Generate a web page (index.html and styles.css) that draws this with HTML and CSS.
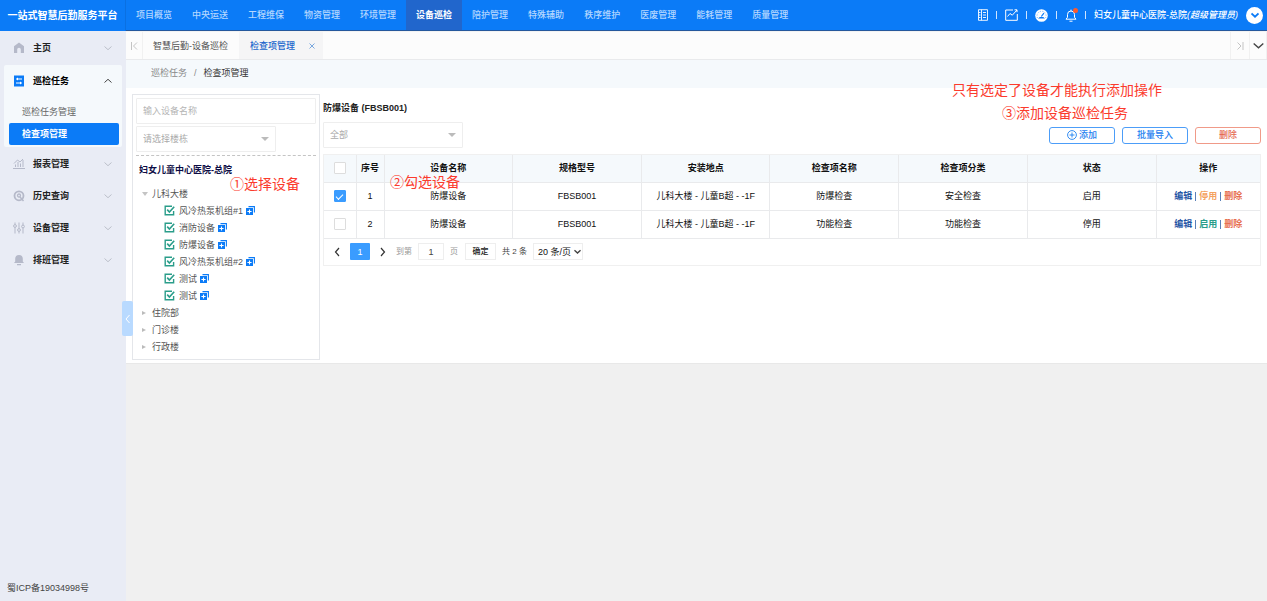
FILE: index.html
```html
<!DOCTYPE html>
<html lang="zh-CN">
<head>
<meta charset="utf-8">
<title>一站式智慧后勤服务平台</title>
<link rel="stylesheet" href="styles.css">
</head>
<body>
<svg class="defs" width="0" height="0" aria-hidden="true">
  <symbol id="down" viewBox="0 0 8 8"><path d="M.5 2.5 4 5.7l3.5-3.2" fill="none" stroke="currentColor"/></symbol>
  <symbol id="check" viewBox="0 0 11 11"><path d="M8 1.2H1.2v8.6h8.4V6" fill="none" stroke="#2a9d8a" stroke-width="1.4"/><path d="M3.2 4.6 5.4 7l4.8-5.2" fill="none" stroke="#2a9d8a" stroke-width="1.6"/></symbol>
  <symbol id="copy" viewBox="0 0 9 9"><path d="M2.5.6h5.9v5.9" fill="none" stroke="#0b7bf7" stroke-width="1.1"/><path d="M0 2h7v7H0z" fill="#0b7bf7"/><path d="M3.5 3.4v4.2M1.4 5.5h4.2" stroke="#fff" stroke-width="1.1"/></symbol>
</svg>
<header class="header">
  <h1 class="brand">一站式智慧后勤服务平台</h1>
  <nav class="nav">
    <a href="#">项目概览</a><a href="#">中央运送</a><a href="#">工程维保</a><a href="#">物资管理</a><a href="#">环境管理</a><a href="#" class="on">设备巡检</a><a href="#">陪护管理</a><a href="#">特殊辅助</a><a href="#">秩序维护</a><a href="#">医废管理</a><a href="#">能耗管理</a><a href="#">质量管理</a>
  </nav>
  <div class="tools">
    <button class="tool" aria-label="文档"><svg width="10" height="12" viewBox="0 0 10 12" fill="none" stroke="#fff" stroke-width=".9"><path d="M.5.7h9v10.600h-9zM3.500.7v10.600M5 3.500h3M5 6h3M5 8.500h3M1 3.500h1.500M1 6h1.500M1 8.500h1.500"/></svg></button>
    <i class="bar"></i>
    <button class="tool" aria-label="统计"><svg width="13" height="12" viewBox="0 0 13 12" fill="none" stroke="#fff"><path d="M8 1H.7v10.300h11.600V5"/><path d="m2.500 7.500 2.500-3 2.300 1.700L12 1M9.500.8H12v2.400"/></svg></button>
    <i class="bar"></i>
    <button class="tool" aria-label="仪表盘"><svg width="13" height="13" viewBox="0 0 13 13"><circle cx="6.500" cy="6.500" r="6.300" fill="#fff"/><path d="M2.500 9a4.500 4.500 0 0 1 1-5.500A4.500 4.500 0 0 1 10.500 9" fill="none" stroke="#0b7bf7" stroke-width=".6" stroke-dasharray="1 1.500"/><path d="M3 9.500h7L8.300 8H4.800z" fill="#0b7bf7"/><path d="m6.300 7.500 2.600-3.400" stroke="#0b7bf7" stroke-width="1.200"/></svg></button>
    <i class="bar"></i>
    <button class="tool bell" aria-label="通知"><svg width="12" height="13" viewBox="0 0 12 13" fill="none" stroke="#fff"><path d="M1 10.200h10L9.500 8.300V5.500a3.500 3.500 0 0 0-7 0v2.800zM6 .6V2M4.500 12.200h3"/></svg><i class="dot"></i></button>
    <i class="bar"></i>
    <span class="user">妇女儿童中心医院-总院<em>(超级管理员)</em></span>
    <button class="more" aria-label="展开"><svg width="8" height="8" stroke-width="1.800"><use href="#down"/></svg></button>
  </div>
</header>
<div class="body">
  <aside class="side">
    <nav class="menu">
      <a class="item" href="#"><svg width="12" height="12" viewBox="0 0 12 12"><path d="M6 .5 11 4.300V11H7.800V7.500a1.800 1.800 0 0 0-3.600 0V11H1V4.300z" fill="#b5b9c9"/></svg><span>主页</span><svg class="arr" width="8" height="8"><use href="#down"/></svg></a>
      <div class="group">
        <a class="item open" href="#"><svg width="12" height="12" viewBox="0 0 12 12"><path d="M1 .5h10v11H1z" fill="#0b7bf7"/><path d="M3 4h6M3 8h6M4.500 2.800v2.400M7.500 6.800v2.400" stroke="#fff"/></svg><span>巡检任务</span><svg class="arr up" width="8" height="8"><use href="#down"/></svg></a>
        <a class="sub" href="#">巡检任务管理</a>
        <a class="sub on" href="#">检查项管理</a>
      </div>
      <a class="item" href="#"><svg width="12" height="12" viewBox="0 0 12 12" fill="none" stroke="#b5b9c9"><path d="M0 10.500h12M2.500 9V6.500M5 9V4M7.500 9V5.500M10 9V2M1 5.500 4.500 2 7 4l3-3"/></svg><span>报表管理</span><svg class="arr" width="8" height="8"><use href="#down"/></svg></a>
      <a class="item" href="#"><svg width="12" height="12" viewBox="0 0 12 12" fill="none" stroke="#b5b9c9"><circle cx="6" cy="5.800" r="4.500" stroke-width="1.800"/><circle cx="6" cy="5.500" r="1.500" stroke-width="1.300"/><path d="m7 7 3.500 4" stroke-width="1.500"/></svg><span>历史查询</span><svg class="arr" width="8" height="8"><use href="#down"/></svg></a>
      <a class="item" href="#"><svg width="12" height="12" viewBox="0 0 12 12" fill="#e9ecf5" stroke="#b5b9c9"><path d="M2 .5v11M6 .5v11M10 .5v11"/><circle cx="2" cy="4" r="1.400"/><circle cx="6" cy="8" r="1.400"/><circle cx="10" cy="4.500" r="1.400"/></svg><span>设备管理</span><svg class="arr" width="8" height="8"><use href="#down"/></svg></a>
      <a class="item" href="#"><svg width="12" height="12" viewBox="0 0 12 12" fill="#b5b9c9"><path d="M1 9h10L9.800 7.500V4.800a3.800 3.800 0 0 0-7.600 0v2.700zM4 10h4v1.300H4z"/></svg><span>排班管理</span><svg class="arr" width="8" height="8"><use href="#down"/></svg></a>
    </nav>
    <p class="icp">蜀ICP备19034998号</p>
    <button class="fold" aria-label="收起菜单"><svg width="5" height="10" viewBox="0 0 5 10"><path d="M4.500 1 1 5l3.500 4" fill="none" stroke="#fff"/></svg></button>
  </aside>
  <main class="main">
    <div class="tabs">
      <button class="edge" aria-label="向左"><svg width="8" height="8" viewBox="0 0 8 8" fill="none" stroke="#c4c4c4"><path d="M1.500 0v8M7 .5 3.500 4 7 7.500"/></svg></button>
      <a class="tab" href="#">智慧后勤-设备巡检</a>
      <a class="tab on" href="#">检查项管理<svg width="6" height="6" viewBox="0 0 6 6"><path d="m.5.5 5 5m0-5-5 5" stroke="#5b94d8" stroke-width=".8"/></svg></a>
      <button class="edge right" aria-label="向右"><svg width="8" height="8" viewBox="0 0 8 8" fill="none" stroke="#c4c4c4"><path d="M7 0v8M1.500.5 5 4 1.500 7.500"/></svg></button>
      <button class="edge last" aria-label="更多标签"><svg width="11" height="11"><use href="#down"/></svg></button>
    </div>
    <div class="crumb"><a href="#">巡检任务</a><span>/</span><b>检查项管理</b></div>
    <div class="content">
      <section class="picker">
        <input class="box" type="text" placeholder="输入设备名称" aria-label="设备名称">
        <div class="drop"><select class="box" aria-label="楼栋"><option>请选择楼栋</option></select></div>
        <hr>
        <h2>妇女儿童中心医院-总院</h2>
        <ul class="tree">
          <li><i class="tri open"></i>儿科大楼</li>
          <li class="leaf"><svg width="11" height="11"><use href="#check"/></svg>风冷热泵机组#1<svg class="copy" width="9" height="9"><use href="#copy"/></svg></li>
          <li class="leaf"><svg width="11" height="11"><use href="#check"/></svg>消防设备<svg class="copy" width="9" height="9"><use href="#copy"/></svg></li>
          <li class="leaf"><svg width="11" height="11"><use href="#check"/></svg>防爆设备<svg class="copy" width="9" height="9"><use href="#copy"/></svg></li>
          <li class="leaf"><svg width="11" height="11"><use href="#check"/></svg>风冷热泵机组#2<svg class="copy" width="9" height="9"><use href="#copy"/></svg></li>
          <li class="leaf"><svg width="11" height="11"><use href="#check"/></svg>测试<svg class="copy" width="9" height="9"><use href="#copy"/></svg></li>
          <li class="leaf"><svg width="11" height="11"><use href="#check"/></svg>测试<svg class="copy" width="9" height="9"><use href="#copy"/></svg></li>
          <li><i class="tri"></i>住院部</li>
          <li><i class="tri"></i>门诊楼</li>
          <li><i class="tri"></i>行政楼</li>
        </ul>
        <span class="note n1">①选择设备</span>
      </section>
      <section class="detail">
        <h2>防爆设备 (FBSB001)</h2>
        <div class="actions">
          <div class="drop"><select class="box" aria-label="筛选"><option>全部</option></select></div>
          <div class="btns">
            <button class="btn"><svg width="10" height="10" viewBox="0 0 10 10" fill="none" stroke="#1e80f0"><circle cx="5" cy="5" r="4.400" stroke-width=".9"/><path d="M5 2.500v5M2.500 5h5" stroke-width=".9"/></svg>添加</button>
            <button class="btn">批量导入</button>
            <button class="btn red">删除</button>
          </div>
        </div>
        <div class="grid">
          <table>
            <colgroup><col class="c-check"><col class="c-no"><col><col><col><col><col><col><col class="c-op"></colgroup>
            <thead><tr><th><input type="checkbox" aria-label="全选"></th><th>序号</th><th>设备名称</th><th>规格型号</th><th>安装地点</th><th>检查项名称</th><th>检查项分类</th><th>状态</th><th>操作</th></tr></thead>
            <tbody>
              <tr><td><input type="checkbox" checked aria-label="选择第1行"></td><td>1</td><td>防爆设备</td><td>FBSB001</td><td>儿科大楼 - 儿童B超 - -1F</td><td>防爆检查</td><td>安全检查</td><td>启用</td><td><div class="ops"><a href="#">编辑</a><i></i><a href="#" class="stop">停用</a><i></i><a href="#" class="del">删除</a></div></td></tr>
              <tr><td><input type="checkbox" aria-label="选择第2行"></td><td>2</td><td>防爆设备</td><td>FBSB001</td><td>儿科大楼 - 儿童B超 - -1F</td><td>功能检查</td><td>功能检查</td><td>停用</td><td><div class="ops"><a href="#">编辑</a><i></i><a href="#" class="start">启用</a><i></i><a href="#" class="del">删除</a></div></td></tr>
            </tbody>
          </table>
          <div class="pager">
            <button class="step" aria-label="上一页"><svg width="6" height="10" viewBox="0 0 6 10"><path d="M5 1 1.500 5 5 9" fill="none" stroke="#333" stroke-width="1.200"/></svg></button>
            <button class="page">1</button>
            <button class="step" aria-label="下一页"><svg width="6" height="10" viewBox="0 0 6 10"><path d="M1 1l3.500 4L1 9" fill="none" stroke="#333" stroke-width="1.200"/></svg></button>
            <label for="goto">到第</label><input id="goto" class="goto" type="text" value="1"><span class="unit">页</span>
            <button class="ok">确定</button>
            <span class="total">共 2 条</span>
            <span class="size"><select aria-label="每页条数"><option>20 条/页</option></select><svg width="7" height="7" stroke-width="1.700"><use href="#down"/></svg></span>
          </div>
        </div>
        <span class="note n2">②勾选设备</span>
        <span class="note n0">只有选定了设备才能执行添加操作</span>
        <span class="note n3">③添加设备巡检任务</span>
      </section>
    </div>
  </main>
</div>
</body>
</html>
```

FILE: styles.css
```css
* { box-sizing: border-box; }
body, h1, h2, p, ul { margin: 0; padding: 0; }
body {
  min-height: 100vh;
  display: flex;
  flex-direction: column;
  background: #f0f0f0;
  color: #222;
  font: 9px/16px "Liberation Sans", "Noto Sans CJK SC", sans-serif;
}
a { color: inherit; text-decoration: none; }
button, input, select { font: inherit; color: inherit; margin: 0; }
button { padding: 0; border: 0; background: none; display: flex; align-items: center; justify-content: center; }
svg { flex: none; display: block; }
.defs { position: absolute; }

.header { display: flex; height: 31px; background: #0b7bf7; color: #fff; }
.brand { width: 126px; border-right: 1px solid #0a70e2; font-size: 10px; line-height: 31px; text-align: center; white-space: nowrap; }
.nav { flex: 1; display: flex; border-bottom: 1px solid #25589c; }
.nav a { padding: 0 10px; line-height: 30px; color: #b4d7ff; font-weight: 500; white-space: nowrap; }
.nav .on { background: #2166cc; color: #fff; font-weight: 700; }
.tools { display: flex; align-items: center; gap: 8px; padding-right: 4px; border-bottom: 1px solid #25589c; }
.bar { width: 1px; height: 8px; background: #cfe5ff; }
.user { white-space: nowrap; font-weight: 500; }
.bell { position: relative; }
.dot { position: absolute; top: -1px; right: -1px; width: 5px; height: 5px; border-radius: 50%; background: #ff5a2a; }
.more { width: 17px; height: 17px; border-radius: 50%; background: #fff; color: #0b7bf7; }

.body { flex: 1; display: flex; }
.side { position: relative; width: 126px; padding-top: 1px; background: #e9ecf5; display: flex; flex-direction: column; justify-content: space-between; }
.item { display: flex; align-items: center; gap: 8px; height: 32px; padding: 0 14px 0 13px; font-weight: 700; color: #222; }
.item span { flex: 1; }
.arr { color: #bcc0ca; }
.group { margin: 1px 4px; padding-bottom: 2px; background: #f5f9fc; border-radius: 2px; }
.group .item { padding: 0 10px 0 9px; margin-bottom: 4px; color: #000; }
.arr.up { color: #444; transform: rotate(180deg); }
.sub { display: block; margin: 0 3px 0 5px; padding-left: 13px; line-height: 22px; color: #666; border-radius: 2px; }
.sub.on { background: #0b7bf7; color: #fff; font-weight: 700; }
.icp { padding: 0 7px 5px; color: #444; }
.fold { position: absolute; z-index: 2; top: 270px; right: -7px; width: 11px; height: 35px; background: #b9daff; border-radius: 2px; }

.main { flex: 1; min-width: 0; }
.tabs { display: flex; height: 29px; background: #fcfcfc; border-top: 1px solid #f3f3f3; border-bottom: 1px solid #e9eaec; }
.edge { width: 17px; border-right: 1px solid #f1f1f1; }
.edge.right { width: 20px; margin-left: auto; border-left: 1px solid #f1f1f1; }
.edge.last { width: 17px; color: #444; }
.tab { display: flex; align-items: center; padding: 0 11px 0 10px; color: #555; }
.tab.on { gap: 14px; padding: 0 8px 0 11px; background: #f5f5f6; color: #2166cc; font-weight: 500; }
.crumb { display: flex; gap: 7px; padding: 5px 25px 7px; background: #f5f9fc; color: #888; }
.crumb b { color: #333; font-weight: 400; }

.content { display: flex; align-items: flex-start; gap: 3px; padding: 6px 6px 3px; background: #fff; border-bottom: 1px solid #e8e8e8; }
.picker { position: relative; flex: none; width: 188px; padding: 3px; border: 1px solid #e4e6ea; }
.box { display: block; width: 100%; height: 26px; padding: 0 6px; border: 1px solid #eee; border-radius: 1px; background: #fff; color: #aaa; appearance: none; }
.box::placeholder { color: #b5b5b5; }
.drop { position: relative; width: 140px; }
.drop::after { content: ""; position: absolute; right: 7px; top: 11px; border: 4px solid transparent; border-top-color: #bbb; border-bottom: 0; pointer-events: none; }
.picker .drop { margin-top: 2px; }
.picker hr { margin: 3px 0 6px; border: 0; border-top: 1px dashed #c4c4c4; }
h2 { font-size: 9px; line-height: 16px; }
.picker h2 { padding-left: 3px; color: #0c0c44; }
.tree { list-style: none; padding: 7px 0 1px; color: #555; }
.tree li { display: flex; align-items: center; height: 17px; padding-left: 6px; }
.tree .leaf { gap: 4px; padding-left: 28px; }
.leaf .copy { margin-left: -1px; }
.tri { width: 4px; margin-right: 6px; border: 2px solid transparent; border-left: 4px solid #bbb; border-right: 0; }
.tri.open { width: 6px; margin-right: 4px; border: 3px solid transparent; border-top: 4px solid #c4c4c4; border-bottom: 0; }

.detail { position: relative; flex: 1; min-width: 0; padding-top: 6px; }
.actions { display: flex; justify-content: space-between; align-items: center; margin: 6px 0; }
.btns { display: flex; gap: 7px; }
.btn { width: 66px; height: 17px; gap: 2px; border: 1px solid #4c9df8; border-radius: 3px; background: #fff; color: #1e80f0; font-weight: 500; }
.btn.red { border-color: #f09a88; color: #e4664e; }
.grid { border: 1px solid #f0f0f0; }
table { width: 100%; table-layout: fixed; border-collapse: collapse; }
.c-check { width: 32px; }
.c-no { width: 28px; }
.c-op { width: 104px; }
th, td { height: 28px; padding: 0; border: 1px solid #e9eaec; text-align: center; color: #111; white-space: nowrap; }
tr > :first-child { border-left: 0; }
tr > :last-child { border-right: 0; }
th { height: 27px; border-top: 0; background: #f5f9fc; }
input[type="checkbox"] { appearance: none; display: block; width: 12px; height: 12px; margin: 0 auto; border: 1px solid #ddd; border-radius: 1px; background: #fff; }
input[type="checkbox"]:checked { border-color: #3a9cff; background: #3a9cff; display: grid; place-items: center; }
input[type="checkbox"]:checked::after { content: ""; width: 6px; height: 3px; border: solid #fff; border-width: 0 0 1px 1px; transform: rotate(-45deg); }
.ops { display: flex; justify-content: center; align-items: center; gap: 3px; font-weight: 700; color: #1f55a5; }
.ops i { width: 1px; height: 9px; background: #5a80b8; }
.ops .stop { color: #f4a261; }
.ops .start { color: #2a9d8a; }
.ops .del { color: #e76f51; }

.pager { display: flex; align-items: center; height: 26px; padding-left: 7px; color: #444; white-space: nowrap; }
.step { width: 12px; height: 17px; }
.page { width: 20px; height: 17px; margin: 0 7px; background: #3a9cff; color: #fff; border-radius: 1px; }
.pager label { margin-left: 7px; font-size: 8px; color: #999; }
.goto { width: 26px; height: 17px; margin: 0 6px; padding: 0; border: 1px solid #eee; text-align: center; }
.unit { font-size: 8px; color: #999; }
.ok { width: 31px; height: 17px; margin: 0 6px 0 7px; border: 1px solid #eee; color: #222; font-size: 8px; font-weight: 500; }
.total { width: 25px; margin-right: 6px; font-size: 8px; }
.size { position: relative; }
.size select { display: block; width: 50px; height: 17px; padding: 0 4px; border: 1px solid #eee; background: #fff; color: #111; appearance: none; }
.size svg { position: absolute; top: 5px; right: 2px; pointer-events: none; }

.note { position: absolute; z-index: 3; color: #fb3b2d; font: 14px/14px "Noto Sans CJK SC", sans-serif; white-space: nowrap; }
.n1 { left: 97px; top: 81px; }
.n2 { left: 67px; top: 80px; }
.n0 { right: 99px; top: -12px; }
.n3 { right: 133px; top: 11px; }
```
